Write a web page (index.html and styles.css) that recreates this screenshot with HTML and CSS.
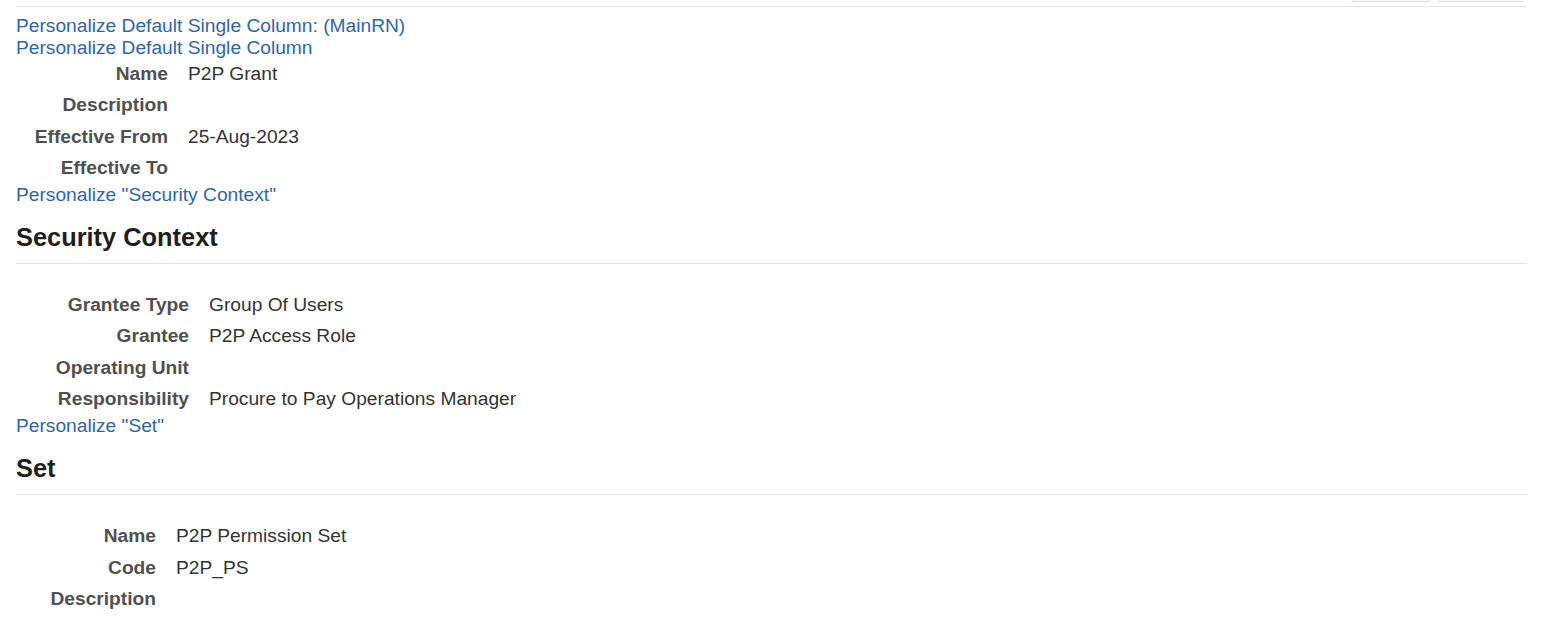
FILE: index.html
```html
<!DOCTYPE html>
<html>
<head>
<meta charset="utf-8">
<link rel="stylesheet" href="styles.css">
</head>
<body>
<div class="page">
  <div class="topbar">
    <span class="btn btn-a"></span>
    <span class="btn btn-b"></span>
  </div>
  <div class="rule top-rule"></div>

  <a class="link" href="#">Personalize Default Single Column: (MainRN)</a>
  <a class="link" href="#">Personalize Default Single Column</a>

  <table class="fields f1">
    <tr><th>Name</th><td>P2P Grant</td></tr>
    <tr><th>Description</th><td></td></tr>
    <tr><th>Effective From</th><td>25-Aug-2023</td></tr>
    <tr><th>Effective To</th><td></td></tr>
  </table>

  <a class="link" href="#">Personalize "Security Context"</a>
  <h2 class="section">Security Context</h2>

  <table class="fields f2">
    <tr><th>Grantee Type</th><td>Group Of Users</td></tr>
    <tr><th>Grantee</th><td>P2P Access Role</td></tr>
    <tr><th>Operating Unit</th><td></td></tr>
    <tr><th>Responsibility</th><td>Procure to Pay Operations Manager</td></tr>
  </table>

  <a class="link" href="#">Personalize "Set"</a>
  <h2 class="section">Set</h2>

  <table class="fields f3">
    <tr><th>Name</th><td>P2P Permission Set</td></tr>
    <tr><th>Code</th><td>P2P_PS</td></tr>
    <tr><th>Description</th><td></td></tr>
  </table>
</div>
</body>
</html>
```

FILE: styles.css
```css
html, body {
  margin: 0;
  padding: 0;
  background: #ffffff;
}

body {
  font-family: "Liberation Sans", Arial, sans-serif;
  font-size: 19.2px;
  line-height: 22px;
  color: #333333;
}

.page {
  padding: 0 14px 0 16px;
}

.topbar {
  height: 2px;
  display: flex;
  justify-content: flex-end;
  gap: 7px;
  padding-right: 4px;
}

.btn {
  display: block;
  height: 1px;
  border: 1px solid #d6d9dd;
  border-top: none;
  border-radius: 0 0 3px 3px;
}

.btn-a { width: 76px; }
.btn-b { width: 84px; }

.rule {
  border-top: 1px solid #dfe4ea;
}

.top-rule {
  margin-top: 4px;
  margin-bottom: 8px;
}

.link {
  display: block;
  width: max-content;
  color: #2d66ad;
  text-decoration: none;
}

.fields {
  border-collapse: collapse;
  border-spacing: 0;
}

.fields th,
.fields td {
  padding: 4px 0 5.3px;
  height: 22px;
  vertical-align: middle;
  white-space: nowrap;
}

.fields th {
  text-align: right;
  font-weight: bold;
  color: #505050;
  padding-right: 20px;
}

.fields td {
  color: #333333;
}

.f1 th { width: 152px; }
.f2 th { width: 173px; }
.f3 th { width: 140px; }

.section {
  margin: 17px 0 26px;
  padding-bottom: 11px;
  border-bottom: 1px solid #dfe4ea;
  font-size: 25.4px;
  line-height: 29px;
  font-weight: bold;
  color: #1e1e1e;
}

.f3 {
  margin-top: 1px;
}
```
